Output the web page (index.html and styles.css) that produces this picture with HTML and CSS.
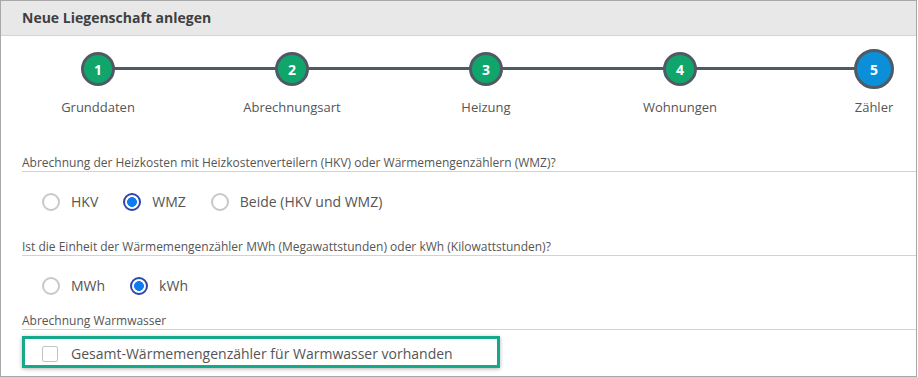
FILE: index.html
```html
<!DOCTYPE html>
<html lang="de">
<head>
<meta charset="utf-8">
<title>Neue Liegenschaft anlegen</title>
<link rel="stylesheet" href="styles.css">
</head>
<body>
<div class="frame">
  <div class="header">Neue Liegenschaft anlegen</div>

  <div class="stepper">
    <div class="step"><div class="dot done">1</div><div class="step-label">Grunddaten</div></div>
    <div class="step"><div class="dot done">2</div><div class="step-label">Abrechnungsart</div></div>
    <div class="step"><div class="dot done">3</div><div class="step-label">Heizung</div></div>
    <div class="step"><div class="dot done">4</div><div class="step-label">Wohnungen</div></div>
    <div class="step"><div class="dot current">5</div><div class="step-label">Zähler</div></div>
  </div>

  <div class="field-label first">Abrechnung der Heizkosten mit Heizkostenverteilern (HKV) oder Wärmemengenzählern (WMZ)?</div>
  <div class="radios">
    <div class="option"><span class="radio"></span><span class="opt-text">HKV</span></div>
    <div class="option"><span class="radio checked"></span><span class="opt-text">WMZ</span></div>
    <div class="option"><span class="radio"></span><span class="opt-text">Beide (HKV und WMZ)</span></div>
  </div>

  <div class="field-label">Ist die Einheit der Wärmemengenzähler MWh (Megawattstunden) oder kWh (Kilowattstunden)?</div>
  <div class="radios">
    <div class="option"><span class="radio"></span><span class="opt-text">MWh</span></div>
    <div class="option"><span class="radio checked"></span><span class="opt-text">kWh</span></div>
  </div>

  <div class="field-label third">Abrechnung Warmwasser</div>
  <div class="check-box">
    <span class="checkbox"></span><span class="check-text">Gesamt-Wärmemengenzähler für Warmwasser vorhanden</span>
  </div>
</div>
</body>
</html>
```
FILE: styles.css
```css
* { box-sizing: border-box; }

html, body {
  margin: 0;
  padding: 0;
  background: #ffffff;
}

body {
  font-family: "Open Sans", "Noto Sans", "Liberation Sans", sans-serif;
  color: #555555;
  width: 918px;
  height: 377px;
  overflow: hidden;
}

.frame {
  width: 917px;
  height: 377px;
  border: 1px solid #a8a8a8;
  overflow: hidden;
  background: #ffffff;
}

.header {
  height: 35px;
  line-height: 34px;
  background: #e8e8e8;
  border-bottom: 1px solid #d4d4d4;
  padding-left: 21px;
  font-size: 14px;
  font-weight: 700;
  color: #3f3f3f;
}

.stepper {
  display: grid;
  grid-template-columns: repeat(5, 194px);
  width: 970px;
  padding-top: 13px;
}

.step {
  position: relative;
  display: flex;
  flex-direction: column;
  align-items: center;
}

.step + .step::before {
  content: "";
  position: absolute;
  left: -97px;
  width: 194px;
  top: 18px;
  height: 3px;
  background: #4f5a65;
  z-index: 0;
}

.dot {
  position: relative;
  z-index: 1;
  height: 40px;
  display: flex;
  align-items: center;
  justify-content: center;
  color: #ffffff;
  font-size: 14px;
  font-weight: 700;
}

.dot.done {
  width: 34px;
  height: 34px;
  margin: 3px 0;
  border: 3px solid #4f5a65;
  border-radius: 50%;
  background: #10a56b;
}

.dot.current {
  width: 40px;
  border: 3px solid #4f5a65;
  border-radius: 50%;
  background: #0a8fd8;
}

.step-label {
  margin-top: 9px;
  font-size: 13px;
  line-height: 18px;
  color: #555555;
  white-space: nowrap;
}

.field-label {
  margin-left: 21px;
  font-size: 12px;
  line-height: 17px;
  color: #555555;
  border-bottom: 1px solid #d2d2d2;
  margin-top: 27px;
}

.field-label.first {
  margin-top: 38px;
}

.field-label.third {
  margin-top: 17px;
}

.radios {
  display: flex;
  align-items: center;
  gap: 25px;
  padding-left: 41px;
  margin-top: 21px;
  height: 18px;
}

.option {
  display: flex;
  align-items: center;
  gap: 11px;
}

.radio {
  width: 18px;
  height: 18px;
  border-radius: 50%;
  border: 2px solid #c8c8c8;
  background: #ffffff;
  flex: none;
}

.radio.checked {
  border-color: #2f46ad;
  background: radial-gradient(circle, #0d7cf0 0 4.6px, #ffffff 5.2px);
}

.opt-text {
  font-size: 14px;
  line-height: 18px;
  color: #555555;
}

.check-box {
  display: flex;
  align-items: center;
  width: 478px;
  height: 32px;
  margin-left: 21px;
  margin-top: 6px;
  border: 3px solid #14a98a;
  box-shadow: 0 1px 4px rgba(0, 0, 0, 0.3);
  padding-left: 17px;
}

.checkbox {
  width: 16px;
  height: 16px;
  border: 1px solid #c4c4c4;
  border-radius: 2px;
  background: #ffffff;
  margin-top: 3px;
  flex: none;
}

.check-text {
  margin-left: 13px;
  font-size: 14px;
  line-height: 20px;
  color: #555555;
  margin-top: 3px;
}
```
